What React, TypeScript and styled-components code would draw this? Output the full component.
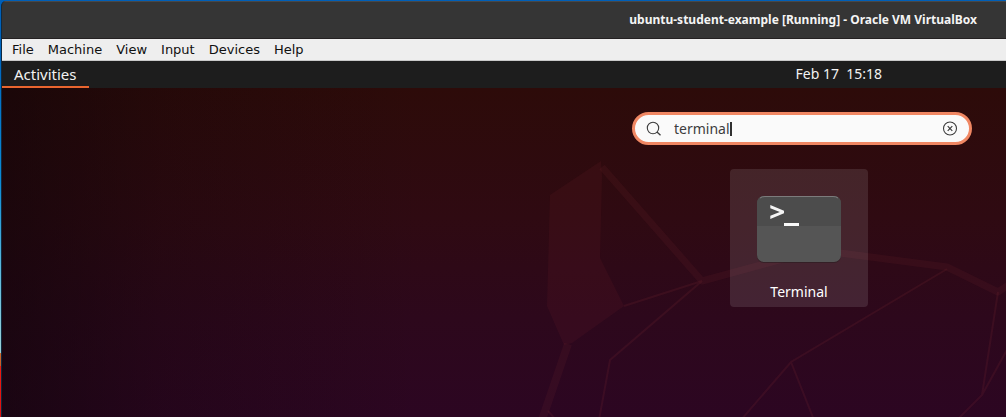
import React, { useState } from "react";
import styled, { createGlobalStyle } from "styled-components";

const GlobalStyle = createGlobalStyle`
  *, *::before, *::after { box-sizing: border-box; }
  body { margin: 0; }
`;

const Desktop = styled.div`
  min-height: 100vh;
  display: flex;
  padding: 1px 0 0 1px;
  background: linear-gradient(
    to bottom,
    #005fb8 0, #0067bf 60px, #0a8ad6 180px, #5db9dc 270px, #9bd0d8 353px,
    #cf6a2e 353px, #c95a28 366px, #ee1a10 366px, #e01010 100%
  );
`;

const Window = styled.div`
  flex: 1;
  min-width: 0;
  display: flex;
  flex-direction: column;
  border-left: 1px solid #10293f;
  border-top-left-radius: 5px;
  overflow: hidden;
  background: #1d1d1d;
`;

const TitleBar = styled.header`
  display: flex;
  justify-content: flex-end;
  align-items: center;
  height: 38px;
  padding-right: 29px;
  background: #353535;
  border-top: 1px solid #484848;
  border-bottom: 1px solid #242122;
`;

const Title = styled.h1`
  margin: 0;
  color: #f4f4f4;
  font: 700 12px/20px "Noto Sans", sans-serif;
  white-space: nowrap;
`;

const MenuBar = styled.nav`
  display: flex;
  align-items: center;
  gap: 14px;
  height: 22px;
  padding: 0 10px;
  background: #eeeeee;
  border-bottom: 1px solid #c8c8c8;
`;

const MenuItem = styled.button`
  padding: 0;
  border: 0;
  background: none;
  color: #101010;
  font: 13px/20px "DejaVu Sans", sans-serif;
`;

const TopBar = styled.div`
  display: flex;
  justify-content: space-between;
  height: 27px;
  padding-right: 124px;
  background: #1d1d1d;
`;

const BarButton = styled.button<{ $active?: boolean }>`
  padding: 0 ${(p) => (p.$active ? "12px" : "0")};
  border: 0;
  border-bottom: 2px solid ${(p) => (p.$active ? "#e9652f" : "transparent")};
  background: none;
  color: #f2f2f2;
  font: ${(p) => (p.$active ? "15px" : "14px")}/24px "Noto Sans", sans-serif;
  white-space: pre;
`;

const Overview = styled.main`
  position: relative;
  flex: 1;
  display: flex;
  justify-content: flex-end;
  padding: 24px 34px 24px 0;
  overflow: hidden;
  background:
    linear-gradient(to right, rgba(14, 4, 8, 0.6) 0, rgba(14, 4, 8, 0.25) 160px, rgba(14, 4, 8, 0) 420px),
    linear-gradient(to bottom, #2d0b09 0, #2f0a12 130px, #2d081c 230px, #2c0622 329px);
`;

const Wallpaper = styled.svg`
  position: absolute;
  top: 0;
  right: 0;
`;

const SearchColumn = styled.div`
  position: relative;
  width: 340px;
  display: flex;
  flex-direction: column;
  gap: 24px;
`;

const SearchBox = styled.form`
  display: flex;
  align-items: center;
  height: 33px;
  padding: 0 11px;
  border: 3px solid #f08763;
  border-radius: 17px;
  background: #fafafa;
  color: #3d3d3d;
`;

const SearchLabel = styled.label`
  display: flex;
  margin-right: 12px;
`;

const SearchInput = styled.input`
  field-sizing: content;
  padding: 0;
  border: 0;
  outline: 0;
  background: none;
  caret-color: transparent;
  color: #3d3d3d;
  font: 14px/20px "Noto Sans", sans-serif;
`;

const Caret = styled.span`
  width: 2px;
  height: 14px;
  background: #303030;
`;

const ClearButton = styled.button`
  display: flex;
  margin-left: auto;
  padding: 0;
  border: 0;
  background: none;
  color: inherit;
`;

const Results = styled.section`
  display: flex;
  padding-left: 98px;
`;

const AppTile = styled.button`
  display: flex;
  flex-direction: column;
  align-items: center;
  gap: 18px;
  width: 138px;
  height: 138px;
  padding: 26px 0 0;
  border: 0;
  border-radius: 4px;
  background: rgba(255, 255, 255, 0.11);
  color: #ffffff;
  font: 14px/20px "Noto Sans", sans-serif;
`;

const menus = ["File", "Machine", "View", "Input", "Devices", "Help"];

function FossaOutline() {
  return (
    <Wallpaper width="476" height="329" viewBox="530 88 476 329" fill="none" stroke="#7a2a30" aria-hidden="true">
      <path d="M601 161L550 195L547 306L564 345L572 343L624 306L600 258L602 176Z" fill="#7a2a2c" fillOpacity=".13" stroke="none" />
      <g strokeOpacity=".14">
        <path d="M602 167L702 281L790 257L840 253L947 267L998 292L1010 284" strokeWidth="7" strokeLinejoin="round" />
        <path d="M568 344L542 420" strokeWidth="8" />
      </g>
      <g strokeOpacity=".2" strokeWidth="2">
        <path d="M624 306L702 281L610 360L599 420" />
        <path d="M947 269L791 362L741 420M791 362L814 420" />
        <path d="M998 292L982 395L957 420M982 395L1008 348" />
        <path d="M548 411L556 420" />
      </g>
    </Wallpaper>
  );
}

function SearchIcon() {
  return (
    <svg width="16" height="16" viewBox="0 0 16 16" fill="none" stroke="currentColor" role="img" aria-label="Search">
      <circle cx="7" cy="7" r="5.7" strokeWidth="1.1" />
      <path d="M11 11L14.5 14.3" strokeWidth="1.3" />
    </svg>
  );
}

function ClearIcon() {
  return (
    <svg width="16" height="16" viewBox="0 0 16 16" fill="none" stroke="currentColor" aria-hidden="true">
      <circle cx="8" cy="7.5" r="6.5" strokeWidth="1.1" />
      <path d="M5.700 5.200L10.300 9.800M10.300 5.200L5.700 9.800" strokeWidth="1.2" />
    </svg>
  );
}

function TerminalIcon() {
  return (
    <svg width="86" height="69" viewBox="0 0 86 69" fill="none" aria-hidden="true">
      <rect x="1" y="2" width="84" height="66" rx="7" fill="#2a1c20" fillOpacity=".6" />
      <rect x="1" y="1" width="84" height="66" rx="7" fill="#555555" />
      <path d="M1 31V8a7 7 0 0 1 7-7H78a7 7 0 0 1 7 7V31Z" fill="#4c4c4c" />
      <path d="M4 3Q6 1.5 9 1.5H77Q80 1.5 82 3" stroke="#7c7c7c" />
      <path d="M14.3 10V13.3L23.800 17L14.3 20.700V24L28 18.300V15.700Z" fill="#f4f4f4" />
      <path d="M28 29.500H43" stroke="#f8f8f8" strokeWidth="3" />
    </svg>
  );
}

export default function App() {
  const [query, setQuery] = useState("terminal");
  return (
    <Desktop>
      <GlobalStyle />
      <Window>
        <TitleBar>
          <Title>ubuntu-student-example [Running] - Oracle VM VirtualBox</Title>
        </TitleBar>
        <MenuBar>
          {menus.map((name) => (
            <MenuItem key={name} type="button">{name}</MenuItem>
          ))}
        </MenuBar>
        <TopBar>
          <BarButton type="button" $active>Activities</BarButton>
          <BarButton type="button">{"Feb 17  15:18"}</BarButton>
        </TopBar>
        <Overview>
          <FossaOutline />
          <SearchColumn>
            <SearchBox role="search" onSubmit={(e) => e.preventDefault()}>
              <SearchLabel htmlFor="search"><SearchIcon /></SearchLabel>
              <SearchInput id="search" type="text" value={query} onChange={(e) => setQuery(e.target.value)} />
              <Caret />
              <ClearButton type="button" aria-label="Clear search" onClick={() => setQuery("")}><ClearIcon /></ClearButton>
            </SearchBox>
            <Results>
              <AppTile type="button">
                <TerminalIcon />
                Terminal
              </AppTile>
            </Results>
          </SearchColumn>
        </Overview>
      </Window>
    </Desktop>
  );
}
